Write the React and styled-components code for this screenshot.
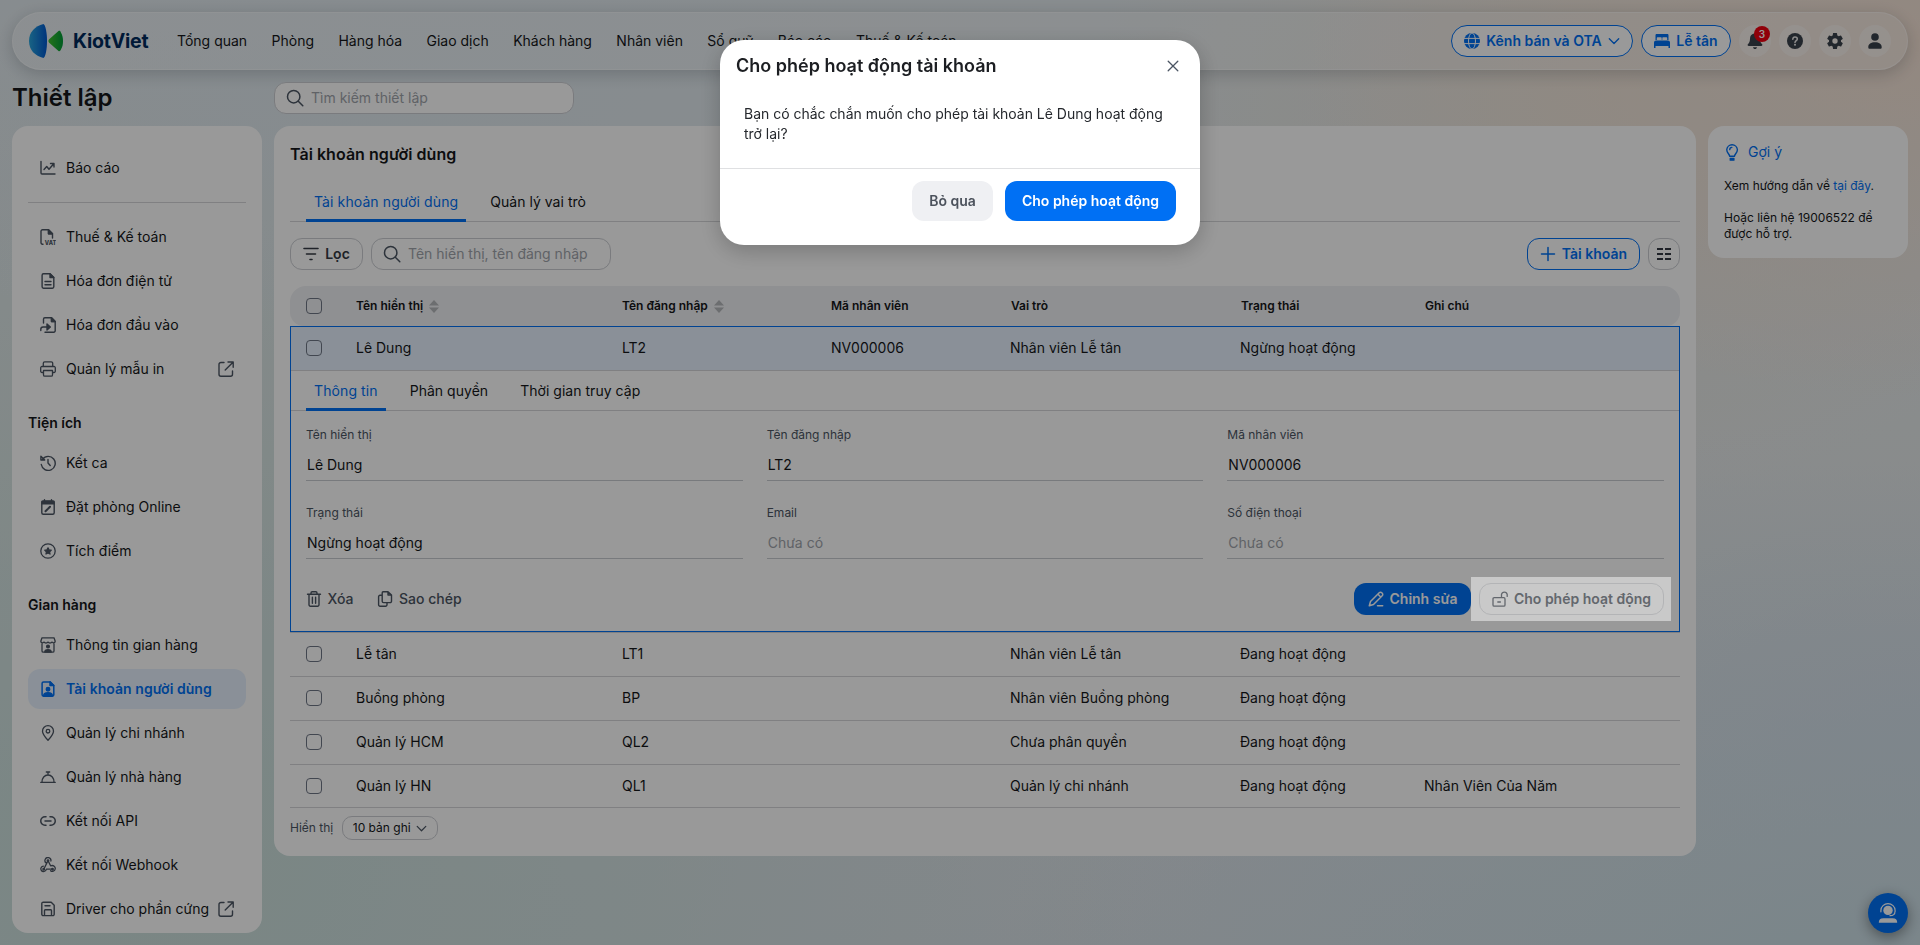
import React from "react";
import styled, { createGlobalStyle, css } from "styled-components";

const blue = "#0070f4";
const ink = "#15171a";
const slate = "#4b5563";
const line = "#d5d6d9";

const GlobalStyle = createGlobalStyle`
  * { box-sizing: border-box; }
  html, body { margin: 0; height: 100%; overflow: hidden; }
  body {
    font-family: Inter, "Noto Sans", sans-serif;
    font-size: 14px;
    line-height: 20px;
    color: ${ink};
  }
  button, input { font: inherit; color: inherit; margin: 0; }
  svg { flex: none; }
`;

const Page = styled.div`
  height: 945px;
  padding: 12px;
  display: flex;
  flex-direction: column;
  background:
    radial-gradient(ellipse 620px 360px at 100% 4%, #f5e3d6 0%, rgba(245, 227, 214, 0) 100%),
    radial-gradient(ellipse 520px 400px at 84% 10%, #ece6dc 0%, rgba(236, 230, 220, 0) 100%),
    radial-gradient(ellipse 700px 260px at 22% 10%, #e0e9ef 0%, rgba(224, 233, 239, 0) 100%),
    radial-gradient(ellipse 900px 560px at 98% 108%, #cbdfe7 0%, rgba(203, 223, 231, 0) 100%),
    radial-gradient(ellipse 400px 220px at 100% 78%, #dadfea 0%, rgba(218, 223, 234, 0) 100%),
    radial-gradient(ellipse 1000px 820px at 8% 90%, #cbe0dc 0%, rgba(203, 224, 220, 0) 100%),
    linear-gradient(180deg, #e3eaee 0%, #e5e9ea 45%, #dbe2e8 100%);
`;

const Header = styled.header`
  flex: none;
  height: 58px;
  padding: 0 16px;
  display: flex;
  align-items: center;
  border: 1px solid rgba(255, 255, 255, 0.4);
  border-radius: 29px;
  background: rgba(255, 255, 255, 0.24);
  box-shadow: 0 4px 16px rgba(20, 30, 40, 0.2);
`;

const Brand = styled.div`
  display: flex;
  align-items: center;
  gap: 10px;
  width: 148px;
  font-size: 19.5px;
  font-weight: 700;
  letter-spacing: -0.2px;
  color: #002a5c;
`;

const Nav = styled.nav`
  display: flex;
  gap: 24.4px;
  flex: 1;
  white-space: nowrap;
`;

const HeaderTools = styled.div`
  display: flex;
  align-items: center;
  gap: 8px;
`;

const PillButton = styled.button`
  height: 32px;
  padding: 0 11px;
  display: inline-flex;
  align-items: center;
  justify-content: center;
  gap: 6px;
  border: 1px solid ${blue};
  border-radius: ${(p) => p.$radius || 16}px;
  background: #fff;
  color: ${blue};
  font-weight: 600;
  white-space: nowrap;
  width: ${(p) => p.$width}px;
`;

const RoundButton = styled.button`
  position: relative;
  width: 32px;
  height: 32px;
  padding: 0;
  display: grid;
  place-items: center;
  border: 0;
  border-radius: 50%;
  background: rgba(255, 255, 255, 0.4);
  color: #3a424c;
`;

const Badge = styled.span`
  position: absolute;
  top: 1px;
  right: 1px;
  width: 16px;
  height: 16px;
  border-radius: 50%;
  background: #f10010;
  color: #fff;
  font-size: 10px;
  font-weight: 600;
  line-height: 16px;
  text-align: center;
`;

const TitleBar = styled.div`
  flex: none;
  height: 32px;
  margin: 12px 0;
  display: flex;
  align-items: center;
`;

const PageTitle = styled.h1`
  margin: 0;
  width: 262px;
  font-size: 24px;
  line-height: 32px;
  font-weight: 600;
`;

const SearchBox = styled.label`
  width: ${(p) => p.$width}px;
  height: 32px;
  padding: 0 11px;
  display: flex;
  align-items: center;
  gap: 7px;
  border: 1px solid #ccced3;
  border-radius: 12px;
  background: #fff;
  color: ${slate};
  input {
    flex: 1;
    min-width: 0;
    padding: 0;
    border: 0;
    outline: 0;
    background: none;
  }
  input::placeholder { color: #a0a4ab; opacity: 1; }
`;

const Columns = styled.div`
  display: flex;
  align-items: flex-start;
  gap: 12px;
`;

const Card = styled.section`
  border-radius: 16px;
  background: #fff;
`;

const Sidebar = styled(Card)`
  width: 250px;
  height: 807px;
  padding: 22px 16px 0;
`;

const SideRule = styled.hr`
  margin: 14px 0;
  border: 0;
  height: 1px;
  background: ${line};
`;

const SideGroup = styled.div`
  display: flex;
  flex-direction: column;
  gap: 4px;
  & + & { margin-top: 14px; }
`;

const SideHeading = styled.h3`
  margin: 0;
  height: 36px;
  font-size: 14px;
  line-height: 40px;
  font-weight: 600;
`;

const SideItem = styled.a`
  height: 40px;
  padding: 0 12px;
  display: flex;
  align-items: center;
  gap: 10px;
  border-radius: 12px;
  white-space: nowrap;
  svg { color: ${slate}; }
  span { flex: 1; min-width: 0; }
  ${(p) =>
    p.$active &&
    css`
      background: #e6f1fe;
      color: ${blue};
      font-weight: 600;
      letter-spacing: 0.05px;
      svg { color: ${blue}; }
    `}
`;

const Main = styled(Card)`
  width: 1422px;
  height: 730px;
  padding: 16px;
  display: flex;
  flex-direction: column;
`;

const MainTitle = styled.h2`
  margin: 0 0 16px;
  font-size: 16px;
  line-height: 24px;
  font-weight: 600;
  letter-spacing: 0.04px;
`;

const Tabs = styled.div`
  height: 40px;
  padding: 0 ${(p) => p.$inset}px;
  display: flex;
  gap: 16px;
  border-bottom: 1px solid ${line};
`;

const Tab = styled.button`
  height: 100%;
  padding: 1px 8px 0;
  border: 0;
  background: none;
  color: ${(p) => (p.$active ? blue : ink)};
  letter-spacing: ${(p) => (p.$active ? 0.1 : 0.03)}px;
  box-shadow: ${(p) => (p.$active ? `0 1px 0 ${blue}, inset 0 -2px 0 ${blue}` : "none")};
`;

const Toolbar = styled.div`
  margin: 16px 0;
  display: flex;
  gap: 8px;
`;

const FilterButton = styled.button`
  width: 73px;
  height: 32px;
  padding: 0;
  display: flex;
  align-items: center;
  justify-content: center;
  gap: 6px;
  border: 1px solid #ccced3;
  border-radius: 12px;
  background: #fff;
  font-weight: 600;
  color: #343a43;
`;

const GridButton = styled(FilterButton)`
  width: 32px;
`;

const Spacer = styled.div`
  flex: 1;
`;

const rowGrid = css`
  display: grid;
  grid-template-columns: 66px 266px 209px 179px 230px 184px 1fr;
  align-items: center;
`;

const TableHead = styled.div`
  ${rowGrid}
  height: 40px;
  border-radius: 16px 16px 14px 14px;
  background: #eff0f3;
  font-size: 12px;
  font-weight: 600;
`;

const HeadCell = styled.div`
  padding-left: ${(p) => (p.$nudge ? 1 : 0)}px;
  display: flex;
  align-items: center;
  gap: 6px;
`;

const TableRow = styled.div`
  ${rowGrid}
  height: 44px;
  padding-bottom: 1px;
  border-top: 1px solid ${line};
  &:nth-last-child(2) {
    padding-bottom: 0;
    border-bottom: 1px solid ${line};
  }
`;

const Expanded = styled.div`
  height: 306px;
  border: 1px solid ${blue};
  display: flex;
  flex-direction: column;
`;

const ExpandedRow = styled.div`
  ${rowGrid}
  height: 44px;
  padding-bottom: 1px;
  grid-template-columns: 65px 266px 209px 179px 230px 184px 1fr;
  border-bottom: 1px solid ${line};
  background: #e6f1fe;
`;

const Check = styled.span`
  display: block;
  width: 16px;
  height: 16px;
  margin-left: ${(p) => p.$left || 16}px;
  border: 1px solid #6f7785;
  border-radius: 4px;
`;

const Form = styled.div`
  padding: 16px 15px 0;
  display: grid;
  grid-template-columns: repeat(3, 1fr);
  gap: 24px;
`;

const Field = styled.div`
  height: 54px;
  display: flex;
  flex-direction: column;
  border-bottom: 1px solid #c9cbd0;
  font-size: 12px;
  line-height: 16px;
  color: ${slate};
`;

const FieldValue = styled.span`
  padding: 12px 1px 0;
  font-size: 14px;
  line-height: 20px;
  color: ${(p) => (p.$empty ? "#a0a4ab" : ink)};
`;

const Actions = styled.div`
  padding: 24px 15px 0;
  display: flex;
  align-items: center;
`;

const TextAction = styled.button`
  height: 32px;
  padding: 0;
  margin-right: 24px;
  display: flex;
  align-items: center;
  gap: 5.5px;
  border: 0;
  background: none;
  color: ${slate};
  font-weight: 500;
`;

const PrimaryButton = styled.button`
  width: ${(p) => p.$width}px;
  height: ${(p) => p.$height}px;
  padding: 0;
  display: flex;
  align-items: center;
  justify-content: center;
  gap: 6px;
  border: 0;
  border-radius: 12px;
  background: ${blue};
  color: #fff;
  font-weight: 600;
`;

const Spotlight = styled.div`
  position: relative;
  z-index: 20;
  padding: 6px 7px 6px 8px;
  margin: -6px -7px -6px 0;
  background: #c9c9c9;
`;

const OutlineButton = styled(FilterButton)`
  width: 185px;
  border-color: #b3b4b6;
  background: transparent;
  color: #63676d;
`;

const Footer = styled.div`
  margin-top: 8px;
  display: flex;
  align-items: center;
  gap: 9px;
  font-size: 12px;
  color: ${slate};
`;

const PageSize = styled.button`
  width: 96px;
  height: 24px;
  padding: 0 1px 0 0;
  display: flex;
  align-items: center;
  justify-content: center;
  gap: 5px;
  border: 1px solid #ccced3;
  border-radius: 10px;
  background: #fff;
  color: ${ink};
  svg { color: ${slate}; }
`;

const Hint = styled(Card)`
  width: 200px;
  height: 132px;
  padding: 16px;
  font-size: 12px;
  line-height: 16px;
  p { margin: 0 0 16px; }
  a { color: ${blue}; }
`;

const HintTitle = styled.div`
  margin-bottom: 16px;
  height: 20px;
  display: flex;
  align-items: center;
  gap: 7px;
  font-size: 14px;
  color: ${blue};
`;

const SupportButton = styled.button`
  position: fixed;
  right: 12px;
  bottom: 12px;
  width: 40px;
  height: 40px;
  padding: 0;
  display: grid;
  place-items: center;
  border: 0;
  border-radius: 50%;
  background: ${blue};
  color: #fff;
  box-shadow: 0 4px 14px rgba(0, 0, 0, 0.4);
`;

const Overlay = styled.div`
  position: fixed;
  inset: 0;
  z-index: 10;
  background: rgba(0, 0, 0, 0.4);
`;

const Dialog = styled.div`
  position: fixed;
  top: 40px;
  left: 720px;
  z-index: 30;
  width: 480px;
  height: 205px;
  border-radius: 24px;
  background: #fff;
  box-shadow: 0 6px 22px rgba(0, 0, 0, 0.22);
`;

const DialogHead = styled.div`
  height: 52px;
  padding: 0 21px 0 16px;
  display: flex;
  align-items: center;
  justify-content: space-between;
  font-size: 18px;
  line-height: 24px;
  font-weight: 600;
  color: #1c1e22;
  svg { color: ${slate}; }
`;

const DialogBody = styled.div`
  height: 77px;
  padding: 12px 24px 0;
  border-bottom: 1px solid #dfe0e2;
  letter-spacing: -0.02px;
  color: #25282d;
`;

const DialogFoot = styled.div`
  padding: 12px 24px;
  display: flex;
  justify-content: flex-end;
  gap: 12px;
`;

const NeutralButton = styled(PrimaryButton)`
  background: #eff0f3;
  color: #4c525c;
`;

const Icon = ({ size = 16, w = 1.3, box = 16, fill = "none", cap = "round", children }) => (
  <svg
    width={size}
    height={size}
    viewBox={`0 0 ${box} ${box}`}
    fill={fill}
    stroke={fill === "none" ? "currentColor" : "none"}
    strokeWidth={w}
    strokeLinecap={cap}
    strokeLinejoin="round"
  >
    {children}
  </svg>
);

const Logo = () => (
  <svg width="34" height="34" viewBox="0 0 34 34">
    <defs>
      <linearGradient id="wing" x1="0" x2="1">
        <stop offset="0" stopColor="#2aa5dc" />
        <stop offset="1" stopColor="#0058d0" />
      </linearGradient>
      <linearGradient id="fin" x1="0" x2="1">
        <stop offset="0" stopColor="#3fc02c" />
        <stop offset="1" stopColor="#009a38" />
      </linearGradient>
    </defs>
    <path d="M14.5 0C16.4 1 18 8 18 17s-1.6 16-3.5 17C6 32 0 26 0 17S6 2 14.5 0z" fill="url(#wing)" />
    <path d="M20.2 15.2 29.5 7c1-.5 1.900 0 2.300 1.200C33.600 11.200 34 14 34 17s-.4 5.800-2.200 8.800c-.4 1.200-1.300 1.700-2.300 1.200l-9.300-8.200c-1-1-1-2.600 0-3.600z" fill="url(#fin)" />
  </svg>
);

const Globe = () => (
  <Icon fill="currentColor">
    <circle cx="8" cy="8" r="8" />
    <g stroke="#fff" strokeWidth="1" fill="none">
      <ellipse cx="8" cy="8" rx="3.500" ry="8" />
      <path d="M0 5.400h16M0 10.600h16" />
    </g>
  </Icon>
);

const Bed = () => (
  <Icon fill="currentColor">
    <path d="M1.500 7V2.300C1.500 1.500 2 1 2.800 1h10.400c.8 0 1.300.5 1.300 1.300V7h-1.300V5.300c0-.6-.4-1-1-1H9.300c-.6 0-1 .4-1 1V7h-.6V5.300c0-.6-.4-1-1-1H3.800c-.6 0-1 .4-1 1V7z" />
    <path d="M2 7.500h12c1 0 2 .9 2 2V15h-1.500v-2h-13v2H0V9.500c0-1.100 1-2 2-2z" />
  </Icon>
);

const Chevron = ({ size = 12 }) => (
  <Icon size={size} box={12} w={1.3}>
    <path d="M1.300 3.700 6 8.500l4.700-4.800" />
  </Icon>
);

const Bell = () => (
  <Icon size={18} box={18} fill="currentColor">
    <path d="M8 1.500c.3-.9 1.700-.9 2 0 2.600.6 4 2.600 4 5.200 0 2.800.8 4.300 2 5.300.8.8.4 2-.8 2H2.800c-1.200 0-1.600-1.200-.8-2 1.200-1 2-2.500 2-5.300 0-2.600 1.400-4.600 4-5.200z" />
    <path d="M7 15.200h4c-.2 1.100-1 1.800-2 1.800s-1.800-.7-2-1.800z" />
  </Icon>
);

const Help = () => (
  <Icon fill="currentColor">
    <circle cx="8" cy="8" r="8" />
    <path d="M5.800 6.200C5.900 4.700 6.800 4 8 4s2.300.8 2.300 2.100C10.300 7.700 8 7.700 8 9.500" fill="none" stroke="#eeecec" strokeWidth="1.500" />
    <circle cx="8" cy="11.800" r="1" fill="#eeecec" />
  </Icon>
);

const Gear = () => (
  <Icon size={20} box={24} fill="currentColor">
    <path d="M19.140 12.940c.040-.3.060-.610.060-.940 0-.320-.020-.640-.070-.940l2.030-1.580a.49.490 0 0 0 .120-.610l-1.920-3.320a.488.488 0 0 0-.590-.220l-2.390.960c-.5-.380-1.030-.7-1.620-.940l-.360-2.540a.484.484 0 0 0-.480-.410h-3.840c-.240 0-.430.170-.470.410l-.360 2.540c-.590.240-1.130.570-1.620.940l-2.390-.960c-.220-.080-.470 0-.590.220L2.740 8.870c-.120.210-.080.470.120.610l2.030 1.580c-.050.3-.090.630-.090.940s.020.640.070.940l-2.030 1.580a.49.490 0 0 0-.120.610l1.920 3.320c.120.220.370.290.590.220l2.390-.960c.5.380 1.030.7 1.620.940l.360 2.540c.050.240.240.410.480.410h3.840c.240 0 .440-.170.470-.410l.360-2.540c.590-.240 1.130-.560 1.620-.940l2.390.960c.220.080.470 0 .590-.220l1.920-3.320c.120-.220.070-.470-.120-.610l-2.010-1.580zM12 15.200A3.200 3.200 0 1 1 12 8.800a3.200 3.200 0 0 1 0 6.400z" />
  </Icon>
);

const Person = () => (
  <Icon fill="currentColor">
    <circle cx="8" cy="4" r="3.800" />
    <path d="M1.300 14.200C1.300 11 4 9.200 8 9.200s6.700 1.800 6.700 5c0 1-.5 1.500-1.400 1.500H2.700c-.9 0-1.400-.5-1.400-1.500z" />
  </Icon>
);

const Magnifier = () => (
  <Icon size={18} box={18} w={1.500}>
    <circle cx="7.700" cy="7.700" r="6.200" />
    <path d="m12.300 12.300 4.500 4.500" />
  </Icon>
);

const ExternalMark = styled.svg`
  margin-left: -2px;
`;

const External = () => (
  <ExternalMark
    width="16"
    height="16"
    viewBox="0 0 16 16"
    fill="none"
    stroke="currentColor"
    strokeWidth="1.4"
    strokeLinecap="round"
    strokeLinejoin="round"
  >
    <path d="M6 1.500H3A2 2 0 0 0 1 3.500v9.800a2 2 0 0 0 2 2h9.500a2 2 0 0 0 2-2V10M10 1h5.200v5.200M15 1.200 7.200 9" />
  </ExternalMark>
);

const Sorter = () => (
  <svg width="10" height="13" viewBox="0 0 10 13" fill="#b5b7bb">
    <path d="M5 0l5 5.500H0zM5 13l5-5.500H0z" />
  </svg>
);

const icons = {
  report: (
    <Icon w={1.400}>
      <path d="M1 1.500V13a1 1 0 0 0 1 1h13M4 9.500l2.700-3 2.300 2.700L13.500 4M10.500 3.500H14V7" />
    </Icon>
  ),
  vat: (
    <Icon w={1.400}>
      <path d="M3 15.200h-.5A1.500 1.500 0 0 1 1 13.700V2.200A1.500 1.500 0 0 1 2.500.7h6l4 4V9M8.500.7v4h4" />
      <path d="M8.500.7v4h4z" fill="currentColor" />
      <text x="4.800" y="16" fontSize="6" fontWeight="800" textLength="11.4" lengthAdjust="spacingAndGlyphs" fill="currentColor" stroke="none">VAT</text>
    </Icon>
  ),
  invoice: (
    <Icon w={1.400}>
      <path d="M3.500.8H10l3.800 3.800v9.200a1.400 1.400 0 0 1-1.400 1.400H3.500a1.400 1.400 0 0 1-1.400-1.400V2.200A1.400 1.400 0 0 1 3.500.8zM5 8.500h6M5 11.700h6" />
      <path d="M10 .8v3.800h3.800z" fill="currentColor" />
    </Icon>
  ),
  inbound: (
    <Icon w={1.400}>
      <path d="M3.500 6V2.200A1.400 1.400 0 0 1 4.900.8h6.600l3.700 3.800v9.200a1.400 1.400 0 0 1-1.400 1.400H5M11.500.8v3.800h3.700M.8 13.500v-1.300C.8 10.500 1.700 10 3 10h5" />
      <path d="m7 7 3.300 3L7 13zM11.500.8v3.800h3.700z" fill="currentColor" />
    </Icon>
  ),
  printer: (
    <Icon>
      <path d="M3.300 5.500V2.200A1.400 1.400 0 0 1 4.700.8h6.600a1.400 1.400 0 0 1 1.400 1.400v3.300M3.300 11.500H2a1.300 1.300 0 0 1-1.300-1.300V6.800A1.300 1.300 0 0 1 2 5.500h12a1.300 1.300 0 0 1 1.300 1.300v3.400a1.300 1.300 0 0 1-1.300 1.300h-1.300M3.500 9.500h9v4.400a1.300 1.300 0 0 1-1.300 1.300H4.800a1.300 1.300 0 0 1-1.300-1.300z" />
    </Icon>
  ),
  history: (
    <Icon w={1.400}>
      <path d="M2.600 4.200A7 7 0 1 1 1.300 9.500M8 4.500V8l2.200 2.500M.9 1.200V5h3.800z" />
    </Icon>
  ),
  calendar: (
    <Icon w={1.400}>
      <rect x="1.800" y="2" width="12.400" height="13.200" rx="1.500" />
      <path d="M2 2.500h12v2.300H2z" fill="currentColor" />
      <path d="M4.500.8v1.500M11.500.8v1.500" />
      <path d="m5.500 12.300 2-2M8.300 9.500l1.700-1.700" strokeWidth="2" />
    </Icon>
  ),
  star: (
    <Icon>
      <circle cx="8" cy="8" r="7.200" />
      <path d="m8 4.900 1 2 2.200.3-1.600 1.600.4 2.200-2-1-2 1 .4-2.200-1.600-1.600 2.200-.3z" fill="currentColor" />
    </Icon>
  ),
  store: (
    <Icon>
      <path d="M2 .8h12l1.200 3.400C15.200 6 12.800 6.300 12 5c-.8 1.300-3.200 1.300-4 0-.8 1.300-3.200 1.300-4 0C3.200 6.300.8 6 .8 4.200zM2 7v6.900a1.300 1.300 0 0 0 1.300 1.300h9.400a1.300 1.300 0 0 0 1.300-1.300V7" />
      <circle cx="8" cy="9.500" r="1.400" fill="currentColor" />
      <path d="M4.800 15c0-3 6.400-3 6.400 0z" fill="currentColor" />
    </Icon>
  ),
  account: (
    <Icon w={1.500}>
      <path d="M3.500.9H10l3.800 3.700v9.200a1.400 1.400 0 0 1-1.400 1.400H3.500a1.400 1.400 0 0 1-1.400-1.400V2.300A1.400 1.400 0 0 1 3.500.9z" />
      <path d="M10 .9v3.700h3.800z" fill="currentColor" />
      <circle cx="8" cy="8.200" r="1.700" fill="currentColor" />
      <path d="M3.700 14.800c0-4 8.600-4 8.600 0z" fill="currentColor" />
    </Icon>
  ),
  pin: (
    <Icon>
      <path d="M8 15.300C4.500 11.500 2.500 9 2.500 6.200a5.500 5.500 0 0 1 11 0c0 2.800-2 5.300-5.500 9.100z" />
      <circle cx="8" cy="6.200" r="1.800" />
    </Icon>
  ),
  cloche: (
    <Icon>
      <path d="M.7 13.300h14.600M2 13C2 9 4.500 6 8 6s6 3 6 7M8 6V3.200M6.300 3h3.400" />
    </Icon>
  ),
  link: (
    <Icon w={1.500}>
      <path d="M6 3.700H5a4.200 4.200 0 0 0 0 8.500h1M10 3.700h1a4.200 4.200 0 0 1 0 8.500h-1M5 8h6" />
    </Icon>
  ),
  webhook: (
    <Icon>
      <path d="M6.700 6.300A3 3 0 1 1 10.900 4M8 3.600l2.600 5.200c3-1 5 1 4.600 3.200-.4 2.400-3.200 3-4.600 1.700M8 3.600 4 11.800M3.300 9.100c-2.500.4-3 2.900-1.900 4.400 1.300 1.700 4.500 1.200 5-1.300h6.200" />
      <circle cx="8" cy="3.600" r=".8" />
      <circle cx="3.700" cy="12.200" r=".8" />
      <circle cx="12.500" cy="12.200" r=".8" />
    </Icon>
  ),
  disk: (
    <Icon w={1.400}>
      <path d="M3.400 1.200h7.800l3 3v9a1.400 1.400 0 0 1-1.400 1.400H3.200a1.400 1.400 0 0 1-1.400-1.400V2.600a1.400 1.400 0 0 1 1.600-1.400zM5 4.700h5M4.500 14.400V9.500a.8.800 0 0 1 .8-.8h5.400a.8.800 0 0 1 .8.800v4.900" />
    </Icon>
  ),
};

const sideGroups = [
  {
    items: [
      ["vat", "Thuế & Kế toán"],
      ["invoice", "Hóa đơn điện tử"],
      ["inbound", "Hóa đơn đầu vào"],
      ["printer", "Quản lý mẫu in", true],
    ],
  },
  {
    title: "Tiện ích",
    items: [
      ["history", "Kết ca"],
      ["calendar", "Đặt phòng Online"],
      ["star", "Tích điểm"],
    ],
  },
  {
    title: "Gian hàng",
    items: [
      ["store", "Thông tin gian hàng"],
      ["account", "Tài khoản người dùng"],
      ["pin", "Quản lý chi nhánh"],
      ["cloche", "Quản lý nhà hàng"],
      ["link", "Kết nối API"],
      ["webhook", "Kết nối Webhook"],
      ["disk", "Driver cho phần cứng", true],
    ],
  },
];

const navItems = [
  "Tổng quan", "Phòng", "Hàng hóa", "Giao dịch", "Khách hàng",
  "Nhân viên", "Sổ quỹ", "Báo cáo", "Thuế & Kế toán",
];

const users = [
  ["Lễ tân", "LT1", "", "Nhân viên Lễ tân", "Đang hoạt động", ""],
  ["Buồng phòng", "BP", "", "Nhân viên Buồng phòng", "Đang hoạt động", ""],
  ["Quản lý HCM", "QL2", "", "Chưa phân quyền", "Đang hoạt động", ""],
  ["Quản lý HN", "QL1", "", "Quản lý chi nhánh", "Đang hoạt động", "Nhân Viên Của Năm"],
];

const fields = [
  ["Tên hiển thị", "Lê Dung"],
  ["Tên đăng nhập", "LT2"],
  ["Mã nhân viên", "NV000006"],
  ["Trạng thái", "Ngừng hoạt động"],
  ["Email", ""],
  ["Số điện thoại", ""],
];

const TopBar = () => (
  <Header>
    <Brand>
      <Logo />
      KiotViet
    </Brand>
    <Nav>
      {navItems.map((label) => (
        <span key={label}>{label}</span>
      ))}
    </Nav>
    <HeaderTools>
      <PillButton $width={182}>
        <Globe />
        Kênh bán và OTA
        <Chevron />
      </PillButton>
      <PillButton $width={90}>
        <Bed />
        Lễ tân
      </PillButton>
      <RoundButton>
        <Bell />
        <Badge>3</Badge>
      </RoundButton>
      <RoundButton><Help /></RoundButton>
      <RoundButton><Gear /></RoundButton>
      <RoundButton><Person /></RoundButton>
    </HeaderTools>
  </Header>
);

const SideNav = () => (
  <Sidebar>
    <SideItem>
      {icons.report}
      <span>Báo cáo</span>
    </SideItem>
    <SideRule />
    {sideGroups.map((group, i) => (
      <SideGroup key={i}>
        {group.title && <SideHeading>{group.title}</SideHeading>}
        {group.items.map(([icon, label, external]) => (
          <SideItem key={label} $active={icon === "account"}>
            {icons[icon]}
            <span>{label}</span>
            {external && <External />}
          </SideItem>
        ))}
      </SideGroup>
    ))}
  </Sidebar>
);

const UserDetail = () => (
  <Expanded>
    <ExpandedRow>
      <Check $left={15} />
      <span>Lê Dung</span>
      <span>LT2</span>
      <span>NV000006</span>
      <span>Nhân viên Lễ tân</span>
      <span>Ngừng hoạt động</span>
    </ExpandedRow>
    <Tabs $inset={15}>
      <Tab $active>Thông tin</Tab>
      <Tab>Phân quyền</Tab>
      <Tab>Thời gian truy cập</Tab>
    </Tabs>
    <Form>
      {fields.map(([label, value]) => (
        <Field key={label}>
          {label}
          <FieldValue $empty={!value}>{value || "Chưa có"}</FieldValue>
        </Field>
      ))}
    </Form>
    <Actions>
      <TextAction>
        <Icon w={1.400}>
          <path d="M1.500 3.300h13M3 3.500v10.300A1.400 1.400 0 0 0 4.400 15.200h7.200a1.400 1.400 0 0 0 1.400-1.400V3.500M5 3V2A1.200 1.200 0 0 1 6.200.8h3.600A1.200 1.200 0 0 1 11 2v1M6.400 6.300v6M9.600 6.300v6" />
        </Icon>
        Xóa
      </TextAction>
      <TextAction>
        <Icon w={1.400}>
          <path d="M6.200.8H11L14.500 4v6.200a1.400 1.400 0 0 1-1.400 1.400H6.600a1.400 1.400 0 0 1-1.400-1.400V2A1.200 1.200 0 0 1 6.200.8zM11 1v3h3.300M5 4.300H3a1.400 1.400 0 0 0-1.400 1.400v8.100A1.400 1.400 0 0 0 3 15.200h5.600A1.400 1.400 0 0 0 10 13.800v-2" />
        </Icon>
        Sao chép
      </TextAction>
      <Spacer />
      <PrimaryButton $width={117} $height={32}>
        <Icon w={1.500}>
          <path d="M1.300 14.800 2.500 10.500 11.200 1.800a1.800 1.800 0 0 1 2.600 0l.4.400a1.800 1.800 0 0 1 0 2.600L5.500 13.500zM9.500 14.800h5.200M10 3.300 12.700 6" />
        </Icon>
        Chỉnh sửa
      </PrimaryButton>
      <Spotlight>
        <OutlineButton>
          <Icon>
            <path d="M2.200 6.700h9.600a1.200 1.200 0 0 1 1.200 1.200v6.100a1.200 1.200 0 0 1-1.200 1.200H2.200A1.200 1.200 0 0 1 1 14V7.900a1.200 1.200 0 0 1 1.200-1.200zM9.500 6.500V3.400a2.900 2.900 0 0 1 5.700 0v2M5.800 11h2.600" />
          </Icon>
          Cho phép hoạt động
        </OutlineButton>
      </Spotlight>
    </Actions>
  </Expanded>
);

const AccountsPanel = () => (
  <Main>
    <MainTitle>Tài khoản người dùng</MainTitle>
    <Tabs $inset={16}>
      <Tab $active>Tài khoản người dùng</Tab>
      <Tab>Quản lý vai trò</Tab>
    </Tabs>
    <Toolbar>
      <FilterButton>
        <Icon w={1.600}>
          <path d="M1 2.500h14M3.500 8h9M7 13.500h2" />
        </Icon>
        Lọc
      </FilterButton>
      <SearchBox $width={240}>
        <Magnifier />
        <input placeholder="Tên hiển thị, tên đăng nhập" />
      </SearchBox>
      <Spacer />
      <PillButton $width={113} $radius={12}>
        <Icon w={1.500}>
          <path d="M8 1.500v13M1.500 8h13" />
        </Icon>
        Tài khoản
      </PillButton>
      <GridButton>
        <Icon w={1.800} cap="butt">
          <path d="M1 3h6M9 3h6M1 8h6M9 8h6M1 13h6M9 13h6" />
        </Icon>
      </GridButton>
    </Toolbar>
    <TableHead>
      <Check />
      <HeadCell>Tên hiển thị <Sorter /></HeadCell>
      <HeadCell>Tên đăng nhập <Sorter /></HeadCell>
      <HeadCell>Mã nhân viên</HeadCell>
      <HeadCell $nudge>Vai trò</HeadCell>
      <HeadCell $nudge>Trạng thái</HeadCell>
      <HeadCell $nudge>Ghi chú</HeadCell>
    </TableHead>
    <UserDetail />
    {users.map((row) => (
      <TableRow key={row[1]}>
        <Check />
        {row.map((cell, i) => (
          <span key={i}>{cell}</span>
        ))}
      </TableRow>
    ))}
    <Footer>
      Hiển thị
      <PageSize>
        10 bản ghi
        <Chevron size={11} />
      </PageSize>
    </Footer>
  </Main>
);

export default function App() {
  return (
    <>
      <GlobalStyle />
      <Page>
        <TopBar />
        <TitleBar>
          <PageTitle>Thiết lập</PageTitle>
          <SearchBox $width={300}>
            <Magnifier />
            <input placeholder="Tìm kiếm thiết lập" />
          </SearchBox>
        </TitleBar>
        <Columns>
          <SideNav />
          <AccountsPanel />
          <Hint>
            <HintTitle>
              <Icon size={17} w={1.300}>
                <path d="M5.300 11.500C5.300 9.500 2.600 8.500 2.600 5.300A5 5 0 0 1 7.600.7a5 5 0 0 1 5 4.600c0 3.200-2.700 4.200-2.700 6.200zM5.400 5.300c0-1.200.8-2 2-2.100" />
                <path d="M5.900 13.500h3.400v1.700H5.900z" fill="currentColor" />
              </Icon>
              Gợi ý
            </HintTitle>
            <p>
              Xem hướng dẫn về <a>tại đây</a>.
            </p>
            <p>Hoặc liên hệ 19006522 để được hỗ trợ.</p>
          </Hint>
        </Columns>
      </Page>
      <SupportButton>
        <Icon size={20} box={20} w={1.200}>
          <circle cx="10" cy="7.400" r="4.700" fill="currentColor" stroke="none" />
          <path d="M2.900 8.800V7.400A7.100 6.700 0 0 1 17.100 7.400v1.400M17 8.500c0 2.900-2 4.200-5 4.200" />
          <path d="M.8 19.700c0-3.200 1.500-4.500 4.500-4.500h9.400c3 0 4.500 1.300 4.500 4.500z" fill="currentColor" stroke="none" />
        </Icon>
      </SupportButton>
      <Overlay />
      <Dialog>
        <DialogHead>
          Cho phép hoạt động tài khoản
          <Icon size={12} box={12} w={1.300}>
            <path d="m1.200 1.200 9.600 9.600M10.800 1.200l-9.600 9.600" />
          </Icon>
        </DialogHead>
        <DialogBody>
          Bạn có chắc chắn muốn cho phép tài khoản Lê Dung hoạt động trở lại?
        </DialogBody>
        <DialogFoot>
          <NeutralButton $width={81} $height={40}>Bỏ qua</NeutralButton>
          <PrimaryButton $width={171} $height={40}>Cho phép hoạt động</PrimaryButton>
        </DialogFoot>
      </Dialog>
    </>
  );
}
